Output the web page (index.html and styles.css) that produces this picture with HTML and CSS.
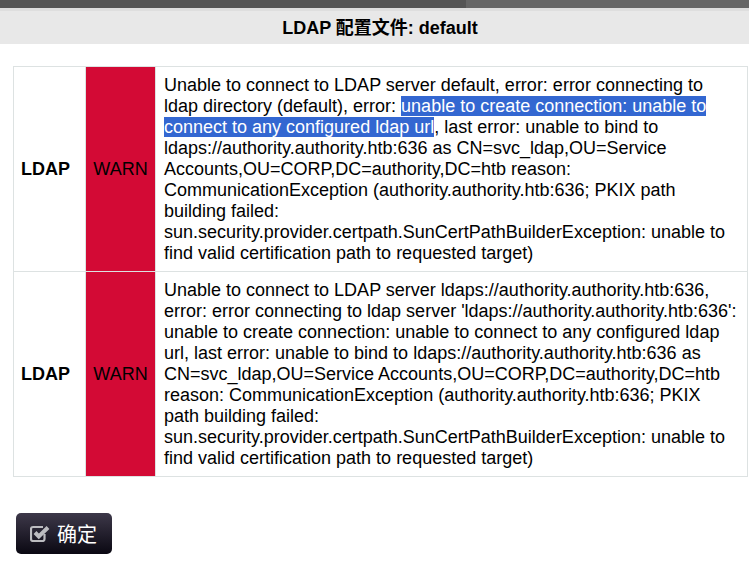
FILE: index.html
```html
<!DOCTYPE html>
<html lang="zh">
<head>
  <meta charset="UTF-8">
  <title>LDAP 配置文件: default</title>
  <link rel="stylesheet" href="styles.css">
</head>
<body>
  <div class="topbar">
    <div class="topbar-left"></div>
    <div class="topbar-right"></div>
  </div>
  <h1 class="title">LDAP 配置文件: default</h1>
  <div class="content">
    <table class="log-table">
      <tbody>
        <tr>
          <td class="source">LDAP</td>
          <td class="level">WARN</td>
          <td class="message">Unable to connect to LDAP server default, error: error connecting to ldap directory (default), error: <span class="selected">unable to create connection: unable to connect to any configured ldap url</span>, last error: unable to bind to ldaps://authority.authority.htb:636 as CN=svc_ldap,OU=Service Accounts,OU=CORP,DC=authority,DC=htb reason: CommunicationException (authority.authority.htb:636; PKIX path building failed: sun.security.provider.certpath.SunCertPathBuilderException: unable to find valid certification path to requested target)</td>
        </tr>
        <tr>
          <td class="source">LDAP</td>
          <td class="level">WARN</td>
          <td class="message">Unable to connect to LDAP server ldaps://authority.authority.htb:636, error: error connecting to ldap server 'ldaps://authority.authority.htb:636': unable to create connection: unable to connect to any configured ldap url, last error: unable to bind to ldaps://authority.authority.htb:636 as CN=svc_ldap,OU=Service Accounts,OU=CORP,DC=authority,DC=htb reason: CommunicationException (authority.authority.htb:636; PKIX path building failed: sun.security.provider.certpath.SunCertPathBuilderException: unable to find valid certification path to requested target)</td>
        </tr>
      </tbody>
    </table>
    <button type="button" class="ok-btn">
      <svg class="ok-icon" width="20" height="17" viewBox="0 0 20 17">
        <path d="M14.5 9V14a2 2 0 0 1-2 2H3a2 2 0 0 1-2-2V4a2 2 0 0 1 2-2h10" fill="none" stroke="currentColor" stroke-width="2.2"/>
        <path d="M5 7.5 8.8 11.5 18 2.5" fill="none" stroke="currentColor" stroke-width="4"/>
      </svg>
      确定
    </button>
  </div>
</body>
</html>
```

FILE: styles.css
```css
body {
  margin: 0;
  background: #fff;
  color: #000;
  font-family: "Liberation Sans", "Noto Sans CJK SC", sans-serif;
  font-size: 18px;
  overflow: hidden;
}

.topbar {
  display: flex;
  height: 8px;
  border-bottom: 3px solid #dedede;
}

.topbar-left {
  width: 466px;
  background: #555;
}

.topbar-right {
  flex: 1;
  background: #666;
}

.title {
  margin: 0;
  height: 33px;
  padding-left: 11px;
  background: #e8e8e8;
  font-size: 18px;
  line-height: 35px;
  text-align: center;
}

.content {
  padding: 22px 1px 0 13px;
}

.log-table {
  width: 100%;
  border-collapse: collapse;
  border: 1px solid #dde2e2;
}

.log-table td {
  padding: 8px 8px 7px;
  line-height: 21px;
  border: 1px solid #dde2e2;
}

.log-table .source {
  width: 57px;
  font-weight: bold;
  padding: 0 7px;
}

.log-table .level {
  width: 69px;
  padding: 0;
  background: #d30a35;
  text-align: center;
}

.selected {
  background: #3367d1;
  color: #fff;
}

.ok-btn {
  display: flex;
  align-items: center;
  gap: 7px;
  width: 96px;
  height: 41px;
  margin: 36px 0 0 3px;
  padding: 0 0 0 14px;
  border: none;
  border-radius: 5px;
  background: linear-gradient(#3d3849, #0a0812);
  color: #fff;
  font-family: inherit;
  font-size: 20px;
}

.ok-icon {
  color: #bcbcc0;
}
```
